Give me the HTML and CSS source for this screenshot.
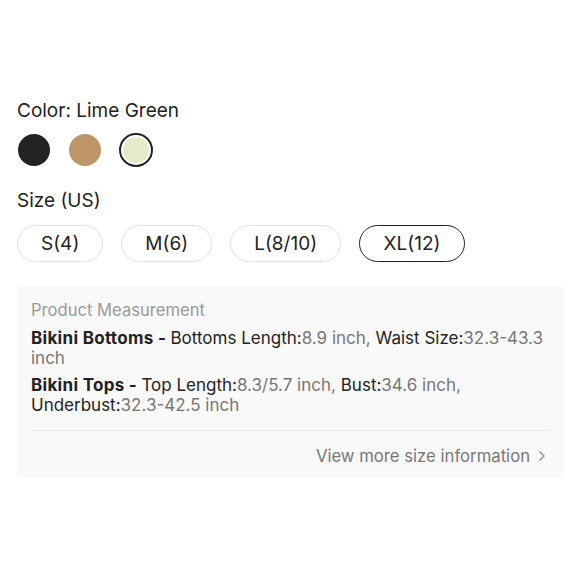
FILE: index.html
```html
<!DOCTYPE html>
<html>
<head>
<meta charset="utf-8">
<link rel="stylesheet" href="styles.css">
</head>
<body>
<div class="panel">
  <div class="label">Color: Lime Green</div>
  <div class="swatches">
    <span class="swatch"><span class="dot black"></span></span>
    <span class="swatch"><span class="dot tan"></span></span>
    <span class="swatch selected"><span class="dot lime"></span></span>
  </div>
  <div class="label size-label">Size (US)</div>
  <div class="sizes">
    <span class="pill">S(4)</span>
    <span class="pill">M(6)</span>
    <span class="pill">L(8/10)</span>
    <span class="pill active">XL(12)</span>
  </div>
  <div class="measure">
    <div class="m-title">Product Measurement</div>
    <p class="m-row"><b>Bikini Bottoms - </b><span class="k">Bottoms Length:</span><span class="v">8.9 inch,</span> <span class="k">Waist Size:</span><span class="v">32.3-43.3</span> <span class="v">inch</span></p>
    <p class="m-row"><b>Bikini Tops - </b><span class="k">Top Length:</span><span class="v">8.3/5.7 inch,</span> <span class="k">Bust:</span><span class="v">34.6 inch,</span> <span class="k">Underbust:</span><span class="v">32.3-42.5 inch</span></p>
    <div class="divider"></div>
    <div class="more">View more size information <svg class="chev" width="8" height="12" viewBox="0 0 8 12"><path d="M1.5 1.5 L6 6 L1.5 10.5" fill="none" stroke="#888" stroke-width="1.3"/></svg></div>
  </div>
</div>
</body>
</html>
```
FILE: styles.css
```css
html, body { margin: 0; padding: 0; background: #fff; }
body { font-family: "Inter", "Liberation Sans", sans-serif; color: #222; }
.panel { padding: 100px 16px 0 17px; }
.label { font-size: 19px; line-height: 22px; color: #222; }
.swatches { display: flex; gap: 17px; margin-top: 11px; }
.swatch { width: 34px; height: 34px; border-radius: 50%; display: flex; align-items: center; justify-content: center; box-sizing: border-box; }
.swatch.selected { border: 2px solid #222; }
.dot { width: 32px; height: 32px; border-radius: 50%; display: block; }
.selected .dot { width: 26px; height: 26px; }
.black { background: #232323; }
.tan { background: #be9569; }
.lime { background: #e3ebc8; }
.size-label { margin-top: 23px; }
.sizes { display: flex; gap: 18px; margin-top: 13px; }
.pill { height: 37px; box-sizing: border-box; border: 1px solid #e2e2e2; border-radius: 19px; padding: 0 23px; display: flex; align-items: center; font-size: 19px; color: #222; }
.pill.active { border: 1.5px solid #222; padding: 0 23.5px; }
.measure { margin-top: 24px; width: 547px; box-sizing: border-box; background: #f9f9f9; padding: 14px 14px 12px 14px; }
.m-title { font-size: 16.6px; line-height: 20px; color: #999; margin-bottom: 8px; }
.m-row { margin: 0 0 7px 0; font-size: 17px; line-height: 20px; color: #777; }
.m-row b { color: #222; font-weight: 700; letter-spacing: 0.3px; }
.m-row .k { color: #222; }
.m-row .v { color: #777; }
.divider { height: 1px; background: #ebebeb; margin-top: 15px; }
.more { margin-top: 15px; font-size: 16.7px; line-height: 20px; color: #777; display: flex; justify-content: flex-end; align-items: center; gap: 8px; padding-right: 4px; }
```
